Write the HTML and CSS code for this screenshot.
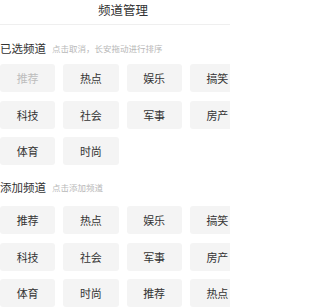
FILE: index.html
```html
<!DOCTYPE html>
<html lang="zh">
<head>
<meta charset="utf-8">
<meta name="viewport" content="width=230">
<link rel="stylesheet" href="styles.css">
</head>
<body>
<div class="page">
  <div class="inner">
    <header class="header"><h1 class="title">频道管理</h1></header>
    <section class="section section-mine">
      <div class="section-head">
        <span class="section-title">已选频道</span>
        <span class="section-hint">点击取消，长安拖动进行排序</span>
      </div>
      <div class="grid">
        <div class="tile tile-fixed">推荐</div>
        <div class="tile">热点</div>
        <div class="tile">娱乐</div>
        <div class="tile">搞笑</div>
        <div class="tile">科技</div>
        <div class="tile">社会</div>
        <div class="tile">军事</div>
        <div class="tile">房产</div>
        <div class="tile">体育</div>
        <div class="tile">时尚</div>
      </div>
    </section>
    <section class="section section-add">
      <div class="section-head">
        <span class="section-title">添加频道</span>
        <span class="section-hint">点击添加频道</span>
      </div>
      <div class="grid">
        <div class="tile">推荐</div>
        <div class="tile">热点</div>
        <div class="tile">娱乐</div>
        <div class="tile">搞笑</div>
        <div class="tile">科技</div>
        <div class="tile">社会</div>
        <div class="tile">军事</div>
        <div class="tile">房产</div>
        <div class="tile">体育</div>
        <div class="tile">时尚</div>
        <div class="tile">推荐</div>
        <div class="tile">热点</div>
      </div>
    </section>
  </div>
</div>
</body>
</html>
```

FILE: styles.css
```css
html, body {
  margin: 0;
  padding: 0;
  background: #ffffff;
  width: 230px;
  overflow: hidden;
}
body {
  font-family: "Noto Sans CJK SC", "Noto Sans", sans-serif;
  color: #333333;
}
.page {
  width: 230px;
  height: 307px;
  overflow: hidden;
}
.inner {
  width: 246px;
}
.header {
  height: 24px;
  border-bottom: 1px solid #efefef;
  display: flex;
  align-items: flex-start;
  justify-content: center;
}
.title {
  margin: 0;
  font-size: 12.5px;
  font-weight: normal;
  line-height: 20px;
  color: #333333;
}
.section-head {
  display: flex;
  align-items: center;
  gap: 6px;
  height: 16px;
}
.section-mine .section-head {
  padding-top: 14.5px;
  margin-bottom: 8.5px;
}
.section-add .section-head {
  padding-top: 13.5px;
  margin-bottom: 11.5px;
}
.section-title {
  font-size: 11.5px;
  line-height: 16px;
  color: #333333;
}
.section-hint {
  font-size: 8.5px;
  line-height: 16px;
  color: #b8b8b8;
}
.grid {
  display: grid;
  grid-template-columns: repeat(4, 55.25px);
  column-gap: 8px;
  row-gap: 8.5px;
}
.tile {
  height: 28px;
  border-radius: 3px;
  background: #f4f4f4;
  display: flex;
  align-items: center;
  justify-content: center;
  font-size: 11px;
  color: #333333;
}
.tile-fixed {
  color: #bdbdbd;
}
```
